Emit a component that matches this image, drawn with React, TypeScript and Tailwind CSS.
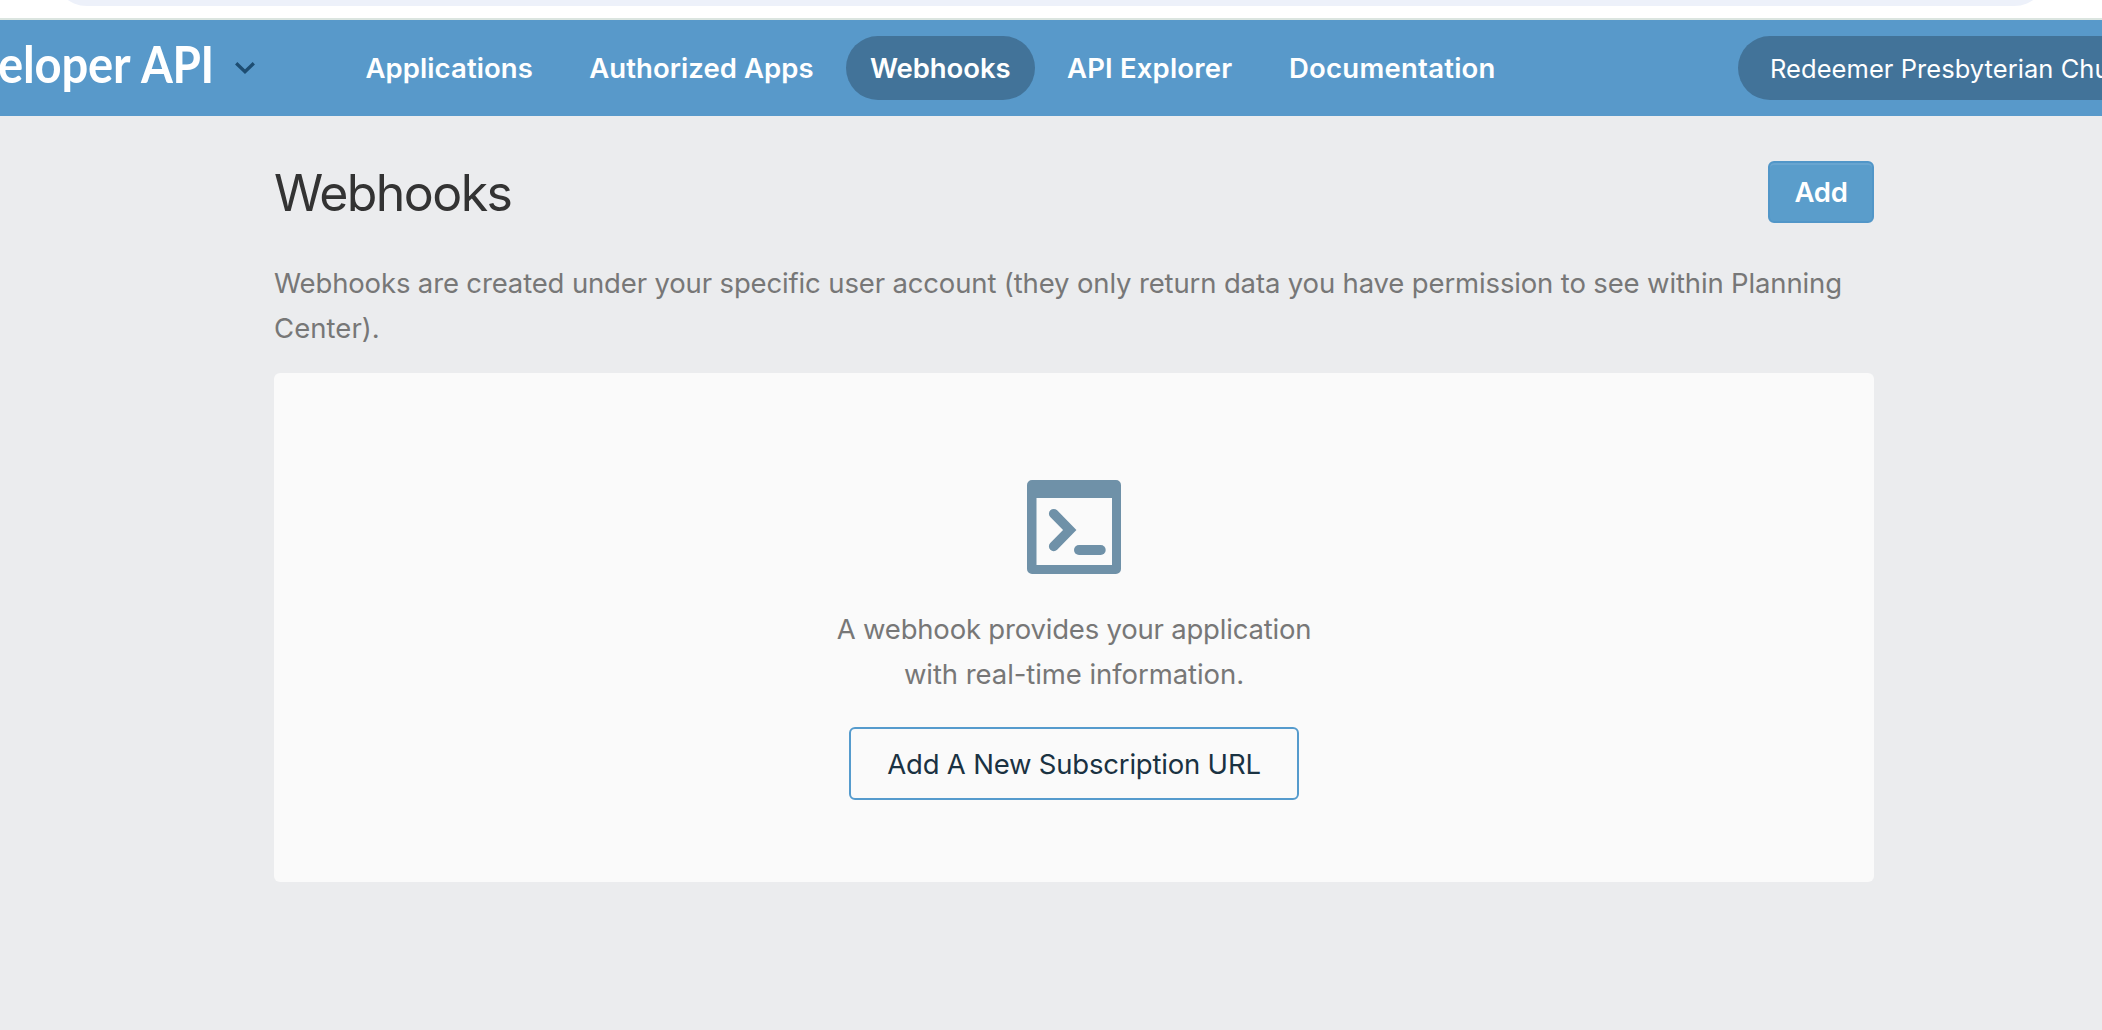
const navItems = [
  { label: 'Applications', cls: 'w-[216px] pl-[23.4px] tracking-[0.1px]' },
  { label: 'Authorized Apps', cls: 'w-[272px] pl-[23.2px] tracking-[0.07px]' },
  { label: 'Webhooks', cls: 'w-[189px] pl-6 tracking-[-0.08px] bg-[#427399]' },
  { label: 'API Explorer', cls: 'w-[214px] pl-6 tracking-[0.17px]' },
  { label: 'Documentation', cls: 'w-[254px] pl-6 tracking-[0.25px]' },
];

function BrowserEdge() {
  return (
    <div className="h-5 overflow-hidden border-b-2 border-[#dbe5e0] bg-white pr-[54px] pl-[53px]">
      <div className="-mt-[62px] h-[68px] rounded-full bg-[#edf1fa]" />
    </div>
  );
}

function Navbar() {
  return (
    <header className="flex h-24 items-center overflow-hidden bg-[#5899ca] text-white">
      <div className="flex w-[342px] shrink-0 items-center">
        <div className="flex w-[235px] shrink-0 items-baseline pb-[9px] font-['Lato',sans-serif] text-[51px] leading-[60px] font-bold whitespace-nowrap">
          <span className="-ml-[2px] block w-[143px] origin-left scale-x-[0.925] tracking-[-0.2px]">eloper</span>
          <span className="block origin-left scale-x-[0.9] tracking-[-0.5px]">API</span>
        </div>
        <svg className="h-4 w-5" viewBox="0 0 20 16" fill="none">
          <path d="M1.2 3.2 10 11.7 18.8 3.2" stroke="#1d4d72" strokeWidth="3.3" />
        </svg>
      </div>
      <nav className="flex shrink-0 gap-2">
        {navItems.map((item) => (
          <a key={item.label} className={`block h-16 shrink-0 rounded-full text-[27.5px] leading-[64px] font-semibold whitespace-nowrap ${item.cls}`}>
            {item.label}
          </a>
        ))}
      </nav>
      <div className="ml-[219px] h-16 w-[460px] shrink-0 rounded-full bg-[#427399] pl-8 text-[25.5px] leading-[65px] tracking-[0.05px] whitespace-nowrap">
        Redeemer Presbyterian Church
      </div>
    </header>
  );
}

function TerminalIcon() {
  return (
    <svg className="h-[94px] w-[94px]" viewBox="0 0 94 94" fill="none">
      <path
        fill="#6f91a8"
        fillRule="evenodd"
        d="M5 0H89a5 5 0 0 1 5 5V89a5 5 0 0 1-5 5H5a5 5 0 0 1-5-5V5a5 5 0 0 1 5-5ZM9.5 18V85H85V18Z"
      />
      <path d="M26.7 33.7 42.7 50 26.7 66.4" stroke="#6f91a8" strokeWidth="9.6" strokeLinecap="round" strokeLinejoin="miter" />
      <rect x="47" y="65" width="31.7" height="10" rx="5" fill="#6f91a8" />
    </svg>
  );
}

export default function App() {
  return (
    <div className="h-[1030px] w-full overflow-hidden bg-[#ebecee] font-['Inter',sans-serif]">
      <BrowserEdge />
      <Navbar />
      <main className="ml-[274px] w-[1600px] pt-[45px]">
        <div className="flex h-[62px] items-center justify-between">
          <h1 className="pt-px text-[50px] leading-[60px] tracking-[-1.55px] text-[#333]">Webhooks</h1>
          <button className="h-[62px] w-[106px] rounded-md border-2 border-[#5196c8] bg-[#5a9dcb] text-[27.5px] leading-[58px] font-semibold tracking-[-0.3px] text-white shadow-[inset_0_2px_0_#69a5d0]">
            Add
          </button>
        </div>
        <p className="mt-[38px] text-[27.5px] leading-[44.8px] tracking-[-0.145px] text-[#777]">
          <span className="whitespace-nowrap">
            Webhooks are created under your specific user account (they only return data you have permission to see within Planning
          </span>
          <br />
          <span className="tracking-[0.05px]">Center).</span>
        </p>
        <section className="mt-[22.4px] flex h-[508.6px] flex-col items-center rounded-md bg-[#fafafa] pt-[107px]">
          <TerminalIcon />
          <p className="mt-[33px] text-center text-[27.5px] leading-[44.8px] tracking-[-0.2px] text-[#777]">
            A webhook provides your application
            <br />
            <span className="tracking-[-0.07px]">with real-time information.</span>
          </p>
          <button className="mt-[30.4px] h-[73px] w-[450px] rounded-md border-2 border-[#559bcd] pt-px text-[27.5px] leading-[69px] tracking-[-0.2px] text-[#1a3242]">
            Add A New Subscription URL
          </button>
        </section>
      </main>
    </div>
  );
}
